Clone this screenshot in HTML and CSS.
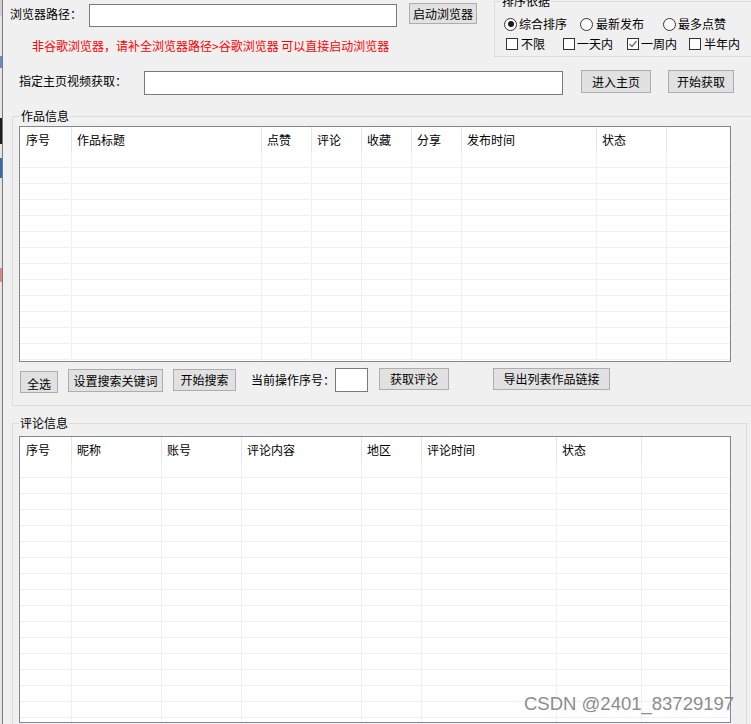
FILE: index.html
```html
<!DOCTYPE html>
<html lang="zh-CN">
<head>
<meta charset="utf-8">
<title>采集工具</title>
<link rel="stylesheet" href="styles.css">
</head>
<body>
<div class="app">
  <div class="strip">
    <div class="seg seg-gray"></div>
    <div class="seg seg-blue1"></div>
    <div class="seg seg-dark"></div>
    <div class="seg seg-blue2"></div>
    <div class="seg seg-red"></div>
  </div>
  <div class="content">
    <div class="top">
      <div class="left-col">
        <div class="path-row">
          <span class="path-label">浏览器路径：</span>
          <div class="input path-input"></div>
          <div class="btn btn-launch">启动浏览器</div>
        </div>
        <div class="hint">非谷歌浏览器，请补全浏览器路径&gt;谷歌浏览器 可以直接启动浏览器</div>
      </div>
      <div class="sort-group">
        <span class="legend sort-legend">排序依据</span>
        <div class="radio-row">
          <label class="opt r1"><span class="radio checked"></span>综合排序</label>
          <label class="opt r2"><span class="radio"></span>最新发布</label>
          <label class="opt r3"><span class="radio"></span>最多点赞</label>
        </div>
        <div class="check-row">
          <label class="opt c1"><span class="check"></span>不限</label>
          <label class="opt c2"><span class="check"></span>一天内</label>
          <label class="opt c3"><span class="check"><svg width="10" height="10" viewBox="0 0 10 10"><polyline points="1.5,5 4,7.5 8.5,2" fill="none" stroke="#6a6a6a" stroke-width="1.2"/></svg></span>一周内</label>
          <label class="opt c4"><span class="check"></span>半年内</label>
        </div>
      </div>
    </div>

    <div class="home-row">
      <span class="home-label">指定主页视频获取：</span>
      <div class="input home-input"></div>
      <div class="btn btn-home">进入主页</div>
      <div class="btn btn-fetch">开始获取</div>
    </div>

    <div class="group works-group">
      <span class="legend works-legend">作品信息</span>
      <div class="grid-wrap works-wrap">
        <table class="grid">
          <colgroup>
            <col style="width:52px"><col style="width:190px"><col style="width:50px"><col style="width:50px"><col style="width:50px"><col style="width:50px"><col style="width:135px"><col style="width:70px"><col style="width:63px">
          </colgroup>
          <thead>
            <tr><th>序号</th><th>作品标题</th><th>点赞</th><th>评论</th><th>收藏</th><th>分享</th><th>发布时间</th><th>状态</th><th class="filler"></th></tr>
          </thead>
          <tbody id="works-body"></tbody>
        </table>
      </div>
      <div class="toolbar">
        <div class="btn btn-all">全选</div>
        <div class="btn btn-keyword">设置搜索关键词</div>
        <div class="btn btn-search">开始搜索</div>
        <span class="op-label">当前操作序号：</span>
        <div class="input op-input"></div>
        <div class="btn btn-comment">获取评论</div>
        <div class="btn btn-export">导出列表作品链接</div>
      </div>
    </div>

    <div class="group comments-group">
      <span class="legend comments-legend">评论信息</span>
      <div class="grid-wrap comments-wrap">
        <table class="grid">
          <colgroup>
            <col style="width:52px"><col style="width:90px"><col style="width:80px"><col style="width:120px"><col style="width:60px"><col style="width:135px"><col style="width:85px"><col style="width:88px">
          </colgroup>
          <thead>
            <tr><th>序号</th><th>昵称</th><th>账号</th><th>评论内容</th><th>地区</th><th>评论时间</th><th>状态</th><th class="filler"></th></tr>
          </thead>
          <tbody id="comments-body"></tbody>
        </table>
      </div>
    </div>
  </div>
  <div class="watermark">CSDN @2401_83729197</div>
</div>
<script>
  function fill(id, rows, cols) {
    var body = document.getElementById(id);
    var html = '';
    for (var r = 0; r < rows; r++) {
      html += '<tr>';
      for (var c = 0; c < cols; c++) {
        html += '<td' + (c === cols - 1 ? ' class="filler"' : '') + '></td>';
      }
      html += '</tr>';
    }
    body.innerHTML = html;
  }
  fill('works-body', 14, 9);
  fill('comments-body', 17, 8);
</script>
</body>
</html>
```

FILE: styles.css
```css
* { box-sizing: border-box; }

html, body {
  margin: 0;
  padding: 0;
  width: 751px;
  height: 724px;
  overflow: hidden;
  background: #f0f0f0;
}

body {
  font-family: "Noto Sans CJK SC", "Microsoft YaHei", sans-serif;
  font-size: 12px;
  color: #000;
}

.app {
  position: relative;
  display: flex;
  width: 751px;
  height: 724px;
  overflow: hidden;
}

/* left edge strip of the window behind */
.strip {
  width: 3px;
  flex: none;
  height: 724px;
  background: #e4e4e4;
  border-right: 1px solid #7a7a7a;
  display: flex;
  flex-direction: column;
}
.seg { width: 2px; }
.seg-gray { height: 16px; background: #cfcfcf; margin-bottom: 40px; }
.seg-blue1 { height: 12px; background: #6a8cc4; margin-bottom: 50px; }
.seg-dark { height: 26px; background: #1d1d1d; margin-bottom: 14px; }
.seg-blue2 { height: 20px; background: #2d6fb6; margin-bottom: 90px; }
.seg-red { height: 14px; background: #d98a8a; }

.content {
  flex: 1;
  min-width: 0;
}

/* generic controls */
.input {
  background: #fff;
  border: 1px solid #7a7a7a;
}
.btn {
  background: #e1e1e1;
  border: 1px solid #adadad;
  display: flex;
  align-items: center;
  justify-content: center;
  line-height: 14px;
  white-space: nowrap;
  flex: none;
}

/* top area */
.top {
  display: flex;
  height: 57px;
}
.left-col {
  width: 491px;
  flex: none;
}
.path-row {
  display: flex;
  align-items: flex-start;
  padding-top: 3px;
}
.path-label {
  width: 79px;
  margin-left: 7px;
  line-height: 21px;
  flex: none;
}
.path-input {
  width: 308px;
  height: 23px;
  margin-top: 1px;
  flex: none;
}
.btn-launch {
  width: 68px;
  height: 21px;
  margin-left: 12px;
}
.hint {
  color: #ff0000;
  margin-top: 11px;
  padding-left: 29px;
  line-height: 16px;
  white-space: nowrap;
}

.sort-group {
  position: relative;
  width: 262px;
  height: 56px;
  margin-top: 1px;
  border: 1px solid #dcdcdc;
  flex: none;
}
.legend {
  position: absolute;
  background: #f0f0f0;
  line-height: 14px;
  padding: 0 1px;
  white-space: nowrap;
}
.sort-legend { left: 6px; top: -8px; }

.radio-row {
  display: flex;
  padding-top: 14px;
  padding-left: 9px;
  height: 30px;
}
.check-row {
  display: flex;
  padding-top: 4px;
  padding-left: 11px;
}
.opt {
  display: flex;
  align-items: center;
  line-height: 16px;
  height: 16px;
  white-space: nowrap;
  flex: none;
}
.r1 { width: 76px; gap: 2px; }
.r2 { width: 83px; gap: 3px; }
.r3 { gap: 2px; }
.c1 { width: 57px; gap: 3px; }
.c2 { width: 64px; gap: 2px; }
.c3 { width: 62px; gap: 2px; }
.c4 { gap: 3px; }

.radio {
  width: 13px;
  height: 13px;
  border: 1px solid #333;
  border-radius: 50%;
  background: #fff;
  position: relative;
  flex: none;
}
.radio.checked::after {
  content: "";
  position: absolute;
  left: 2.5px;
  top: 2.5px;
  width: 6px;
  height: 6px;
  border-radius: 50%;
  background: #1a1a1a;
}
.check {
  width: 12px;
  height: 12px;
  border: 1px solid #333;
  background: #fff;
  display: flex;
  align-items: center;
  justify-content: center;
  flex: none;
}

/* homepage row */
.home-row {
  display: flex;
  align-items: flex-start;
  margin-top: 13px;
}
.home-label {
  width: 125px;
  margin-left: 16px;
  line-height: 22px;
  flex: none;
}
.home-input {
  width: 419px;
  height: 24px;
  margin-top: 1px;
  flex: none;
}
.btn-home {
  width: 70px;
  height: 23px;
  margin-left: 18px;
}
.btn-fetch {
  width: 66px;
  height: 23px;
  margin-left: 17px;
}

/* groups */
.group {
  position: relative;
  border: 1px solid #dcdcdc;
  margin-left: 9px;
}
.works-group {
  width: 760px;
  height: 290px;
  margin-top: 21px;
  padding: 9px 0 0 6px;
}
.works-legend { left: 7px; top: -8px; }
.comments-group {
  width: 735px;
  height: 320px;
  margin-top: 17px;
  padding: 12px 0 0 6px;
}
.comments-legend { left: 6px; top: -8px; }

/* list views */
.grid-wrap {
  border: 1px solid #828790;
  background: #fff;
  overflow: hidden;
  width: 712px;
}
.works-wrap { height: 236px; }
.comments-wrap { height: 287px; }

.grid {
  table-layout: fixed;
  border-collapse: separate;
  border-spacing: 0;
  width: 710px;
}
.grid th {
  height: 25px;
  padding: 0 0 0 5px;
  text-align: left;
  font-weight: normal;
  line-height: 14px;
  border-right: 1px solid #e5e5e5;
  white-space: nowrap;
  vertical-align: middle;
}
.grid th:first-child { padding-left: 6px; }
.grid td {
  height: 16px;
  padding: 0;
  border-right: 1px solid #f0f0f0;
  border-bottom: 1px solid #f0f0f0;
}
.grid th.filler { border-right: none; }
.grid td.filler { border-right: none; }

/* toolbar */
.toolbar {
  display: flex;
  align-items: flex-start;
  margin-top: 6px;
  padding-left: 1px;
}
.btn-all {
  width: 38px;
  height: 22px;
  margin-top: 3px;
  padding-top: 4px;
}
.btn-keyword {
  width: 95px;
  height: 23px;
  margin-top: 1px;
  margin-left: 10px;
}
.btn-search {
  width: 63px;
  height: 22px;
  margin-top: 1px;
  margin-left: 10px;
}
.op-label {
  margin-left: 15px;
  width: 84px;
  line-height: 24px;
  flex: none;
}
.op-input {
  width: 33px;
  height: 24px;
  flex: none;
}
.btn-comment {
  width: 70px;
  height: 22px;
  margin-left: 11px;
}
.btn-export {
  width: 117px;
  height: 22px;
  margin-left: 44px;
}

/* watermark overlay */
.watermark {
  position: absolute;
  left: 524px;
  top: 693px;
  font-family: "Liberation Sans", Arial, sans-serif;
  font-size: 18.5px;
  line-height: 22px;
  color: #8c8c8c;
  white-space: nowrap;
}
```
